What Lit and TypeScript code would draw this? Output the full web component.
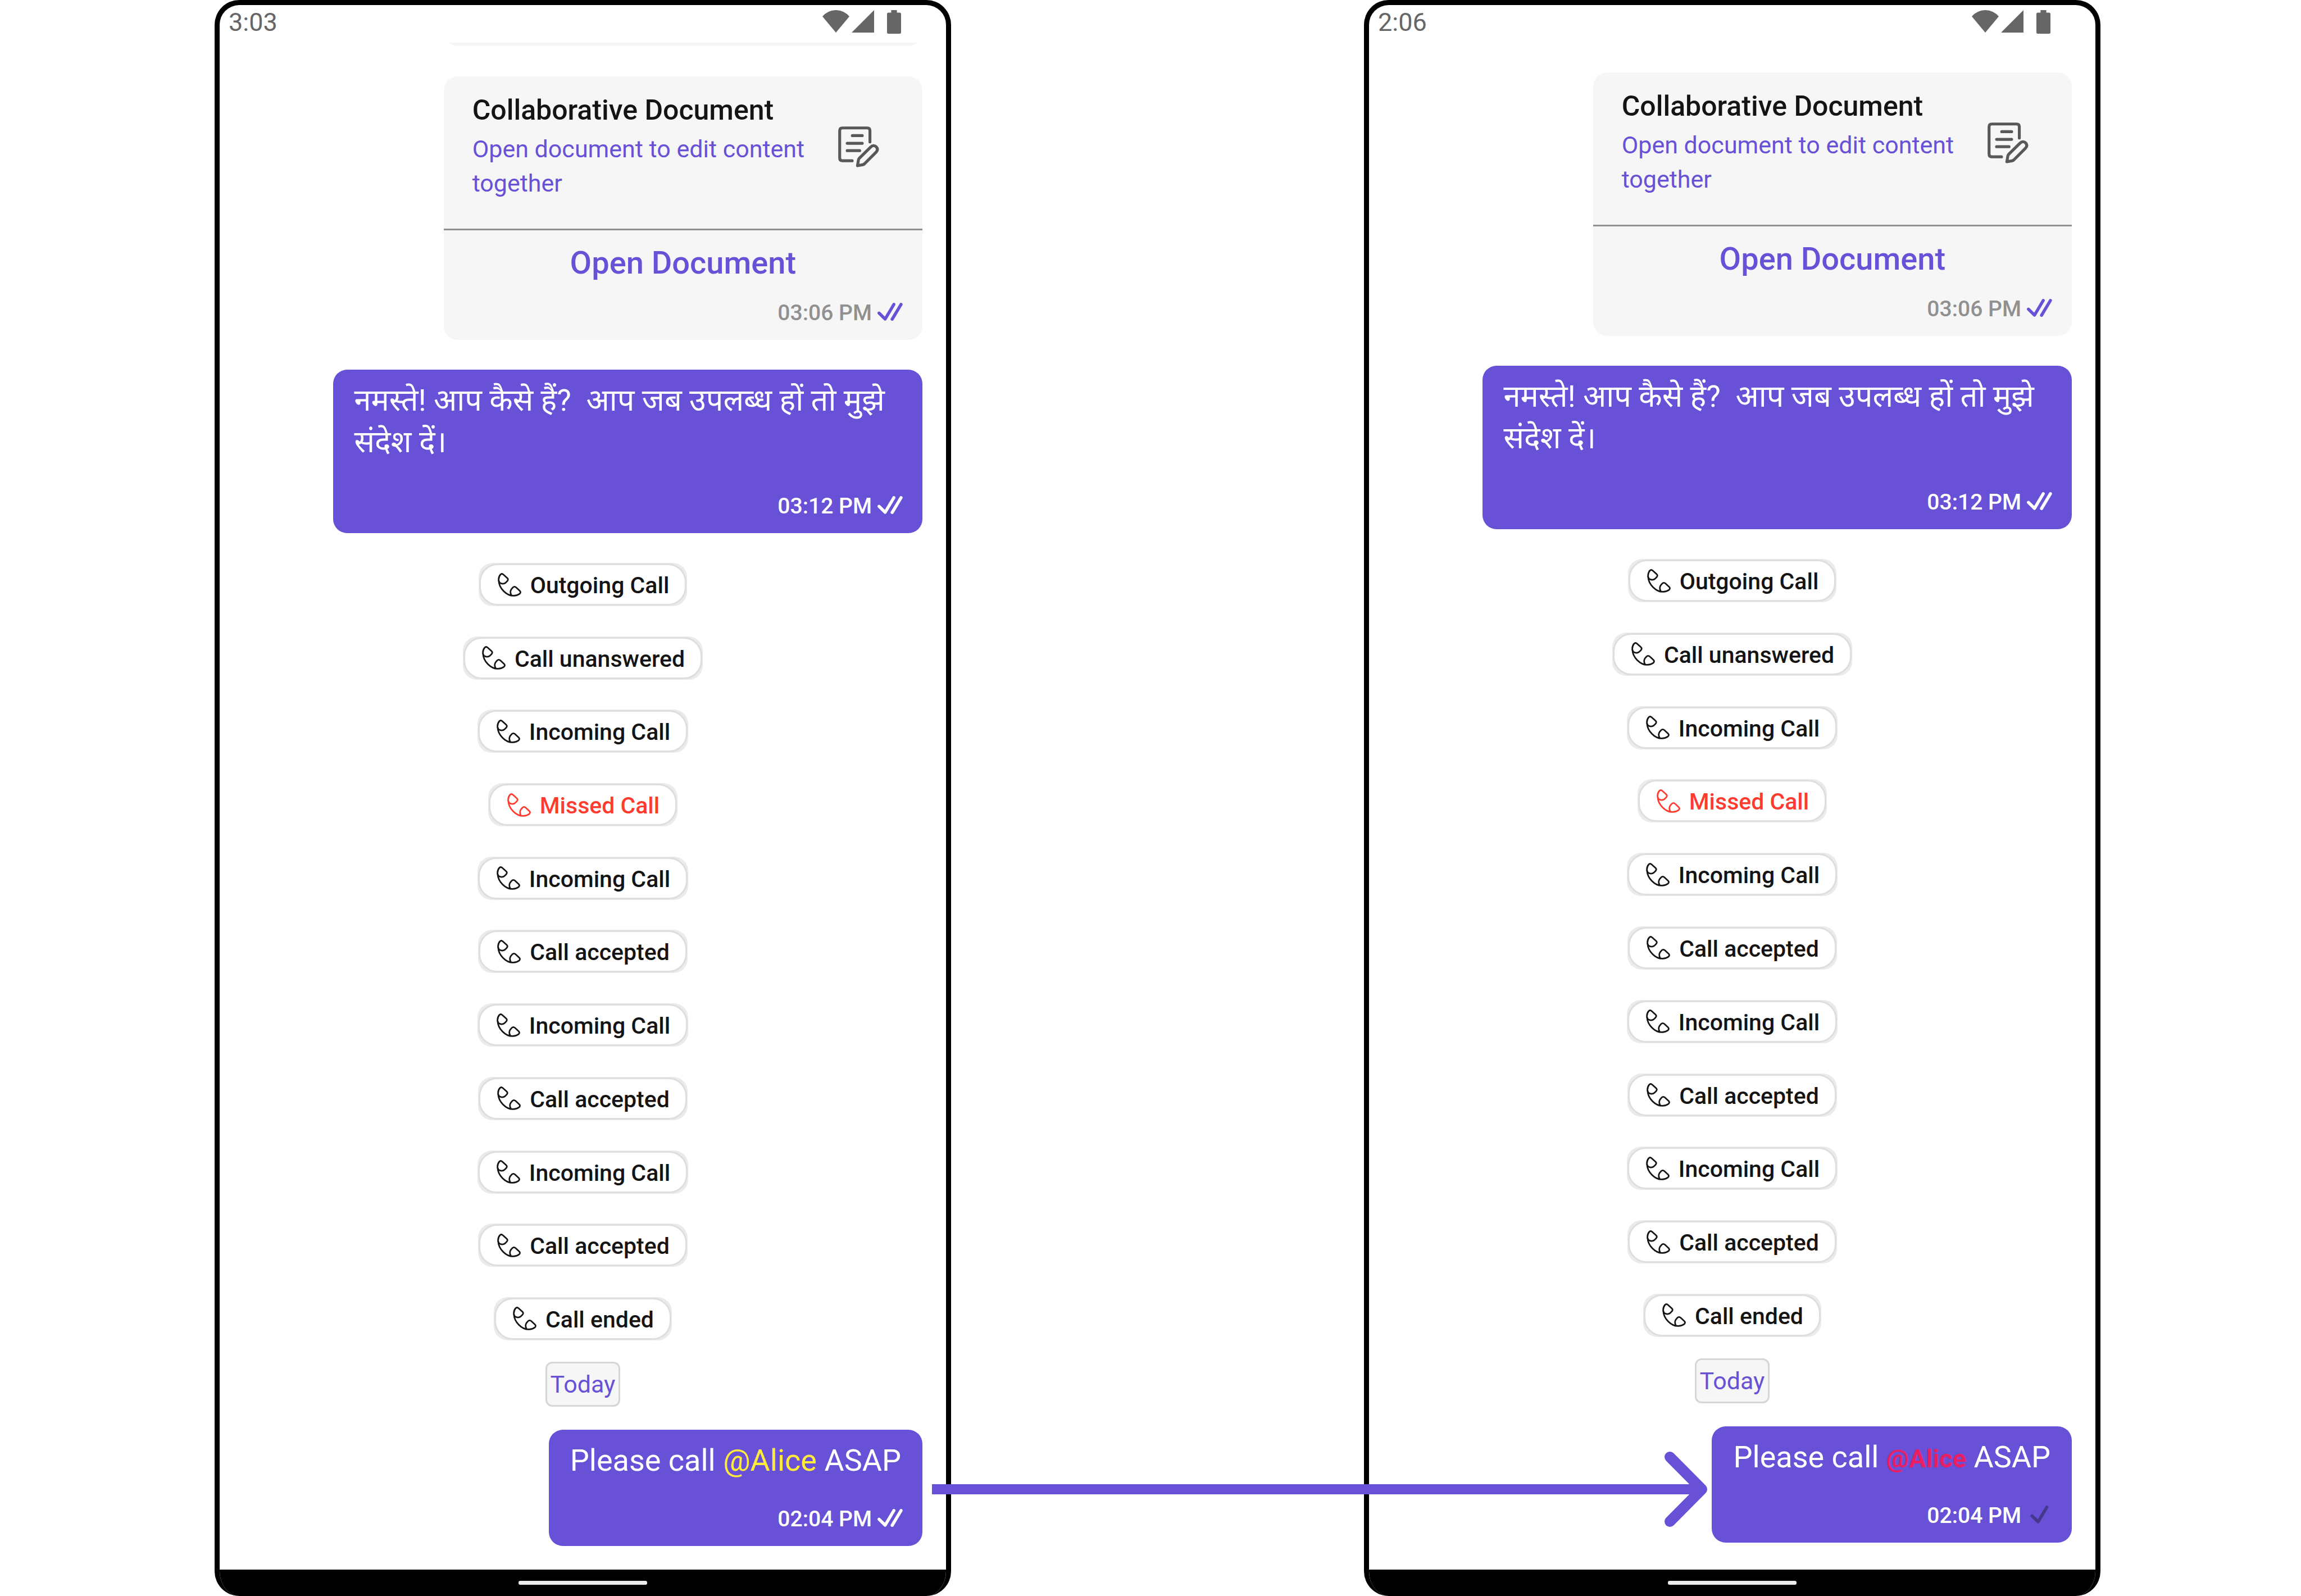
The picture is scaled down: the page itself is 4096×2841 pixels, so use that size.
import { LitElement, html, svg, css, nothing } from "lit";
import { customElement, property } from "lit/decorators.js";
import { classMap } from "lit/directives/class-map.js";

type CallLabel = { text: string; missed?: boolean };

const CALLS: CallLabel[] = [
  { text: "Outgoing Call" },
  { text: "Call unanswered" },
  { text: "Incoming Call" },
  { text: "Missed Call", missed: true },
  { text: "Incoming Call" },
  { text: "Call accepted" },
  { text: "Incoming Call" },
  { text: "Call accepted" },
  { text: "Incoming Call" },
  { text: "Call accepted" },
  { text: "Call ended" },
];

const HINDI = "नमस्ते! आप कैसे हैं?  आप जब उपलब्ध हों तो मुझे संदेश दें।";

const base = css`
  *,
  *::before,
  *::after {
    box-sizing: border-box;
  }
  svg {
    display: block;
    flex: none;
  }
`;

/** Time of a message with its delivery ticks. */
@customElement("message-receipt")
export class MessageReceipt extends LitElement {
  @property() time = "";
  @property({ type: Boolean }) single = false;

  static styles = [
    base,
    css`
      :host {
        display: flex;
        justify-content: flex-end;
        align-items: center;
        gap: 10px;
        padding: 0 35px 26px 0;
        font-size: 39px;
        line-height: 44px;
        font-weight: 500;
      }
      .ticks {
        width: 45px;
        height: 36px;
        fill: none;
        stroke: var(--tick, currentColor);
        stroke-width: 18;
        stroke-linecap: round;
        stroke-linejoin: round;
      }
    `,
  ];

  render() {
    return html`<span>${this.time}</span>
      <svg
        class="ticks"
        viewBox=${this.single ? "624 66 148 118" : "645 66 148 118"}
        aria-hidden="true"
      >
        <path d="M654 126L690 161L741 75" />
        ${this.single ? nothing : svg`<path d="M731 162L783 75" />`}
      </svg>`;
  }
}

/** Card that invites the reader to open a shared document. */
@customElement("document-card")
export class DocumentCard extends LitElement {
  static styles = [
    base,
    css`
      :host {
        display: block;
        border-radius: 25px;
        background: #f6f6f6;
        color: #909090;
        --tick: #6851d6;
      }
      .about {
        display: flex;
        align-items: center;
        justify-content: space-between;
        padding: 30px 77px 50px 51px;
        border-bottom: 3px solid #909090;
      }
      .title {
        margin: 0 0 8px;
        font-size: 50px;
        line-height: 61px;
        font-weight: 500;
        color: #141414;
      }
      .text {
        margin: 0;
        font-size: 43px;
        line-height: 61px;
        color: #6851d6;
      }
      .icon {
        width: 73px;
        height: 73px;
        fill: none;
        stroke: #585858;
        stroke-width: 17;
        stroke-linecap: round;
        stroke-linejoin: round;
      }
      .open {
        display: block;
        width: 100%;
        margin: 26px 0 35px;
        padding: 0;
        border: 0;
        background: none;
        font: 500 56px/64px Roboto, "Liberation Sans", sans-serif;
        color: #6851d6;
        cursor: pointer;
      }
    `,
  ];

  render() {
    return html`<div class="about">
        <div>
          <h2 class="title">Collaborative Document</h2>
          <p class="text">Open document to edit content together</p>
        </div>
        <svg class="icon" viewBox="57 62 240 240" aria-hidden="true">
          <path
            d="M243 153V87Q243 71 227 71H82Q66 71 66 87V247Q66 263 82 263H139M140 116H198M110 161H198M110 204H183"
          />
          <path
            d="M170 292L176 257Q177 252 181 248L247 183C258 172 271 173 279 181C288 190 290 201 279 213L213 279Q208 285 202 286Z"
          />
        </svg>
      </div>
      <button class="open" type="button">Open Document</button>
      <message-receipt time="03:06 PM"></message-receipt>`;
  }
}

/** Pill that records one call event. */
@customElement("call-chip")
export class CallChip extends LitElement {
  @property() label = "";
  @property({ type: Boolean }) missed = false;

  static styles = [
    base,
    css`
      :host {
        display: block;
        padding: 1px;
        border-radius: 25px;
        background: #ebebeb;
      }
      .pill {
        display: flex;
        align-items: center;
        gap: 16px;
        padding: 0 28px 0 30px;
        border: 3px solid #dedede;
        border-radius: 33px;
        background: #fff;
        color: #141414;
      }
      .missed {
        color: #ff3b30;
      }
      .label {
        padding-top: 3px;
        font-size: 41px;
        line-height: 66px;
        font-weight: 500;
        white-space: nowrap;
      }
      .icon {
        width: 42px;
        height: 42px;
        fill: none;
        stroke: currentColor;
        stroke-width: 9;
        stroke-linecap: round;
        stroke-linejoin: round;
      }
    `,
  ];

  render() {
    return html`<div class=${classMap({ pill: true, missed: this.missed })}>
      <svg class="icon" viewBox="34 61 138 138" aria-hidden="true">
        <path
          d="M40 106C38 92 44 77 50 70Q58 62 67 70L89 90Q98 98 91 107L80 118Q67 128 50 120Q42 116 40 106Z"
        />
        <path
          d="M40 106C42 150 85 195 128 194C144 193 155 188 163 182Q171 174 163 165L141 145Q132 137 123 145L113 157Q104 171 113 189"
        />
      </svg>
      <span class="label">${this.label}</span>
    </div>`;
  }
}

/** Phone frame showing the conversation. */
@customElement("chat-phone")
export class ChatPhone extends LitElement {
  @property() clock = "";
  @property({ type: Boolean }) styled = false;

  static styles = [
    base,
    css`
      :host {
        display: flex;
        flex-direction: column;
        min-width: 0;
        min-height: 100vh;
        border: 9px solid #000;
        border-bottom: 0;
        border-radius: 44px;
        overflow: hidden;
        background: #fff;
      }
      .status {
        display: flex;
        align-items: flex-start;
        height: 67px;
        padding: 0 80px 0 16px;
        color: #666;
        fill: #666;
      }
      .clock {
        flex: 1;
        font-size: 45px;
        line-height: 62px;
      }
      .wifi {
        width: 48px;
        height: 40px;
        margin: 9px 4px 0 0;
      }
      .signal {
        width: 40px;
        height: 40px;
        margin: 9px 23px 0 0;
      }
      .battery {
        width: 25px;
        height: 42px;
        margin-top: 9px;
      }
      .chat {
        flex: 1;
        display: flex;
        flex-direction: column;
        align-items: flex-end;
        padding: 0 42px 42px;
      }
      .scrolled {
        padding: 53px 42px 48px;
      }
      .earlier {
        display: flex;
        align-items: flex-end;
        width: 70.5%;
        height: 6px;
        margin-bottom: 54px;
        overflow: hidden;
      }
      .earlier-card {
        flex: 1;
        height: 50px;
        border-radius: 25px;
        background: #f6f6f6;
      }
      .card {
        width: 70.5%;
      }
      .bubble {
        max-width: 86.8%;
        border-radius: 25px;
        background: #6851d6;
        color: #fff;
      }
      .greeting {
        margin: 53px 0;
      }
      .text {
        margin: 0 0 45px;
        padding: 18px 38px 0;
        font-size: 54px;
        line-height: 74px;
        white-space: pre-wrap;
      }
      .greeting .text {
        padding-bottom: 10px;
      }
      .mention {
        color: #ffeb3b;
      }
      .mention-styled {
        font-size: 45px;
        font-weight: 700;
        line-height: 1;
        color: #e91e63;
      }
      .sent {
        --tick: #46368c;
      }
      .calls {
        flex: 1;
        align-self: stretch;
        display: flex;
        flex-direction: column;
        align-items: center;
        justify-content: space-between;
        margin: 0;
        padding: 0;
        list-style: none;
      }
      .day {
        align-self: center;
        margin: 38px 0 41px;
        padding: 0 6px;
        border: 3px solid #d6d6d6;
        border-radius: 12px;
        background: #f6f6f6;
        font-size: 43px;
        line-height: 74px;
        color: #6851d6;
      }
      .nav {
        display: flex;
        align-items: center;
        justify-content: center;
        height: 47px;
        background: #000;
      }
      .handle {
        width: 229px;
        height: 7px;
        border-radius: 3px;
        background: #ebebeb;
      }
    `,
  ];

  render() {
    return html`<div class="status">
        <span class="clock">${this.clock}</span>
        <svg class="wifi" viewBox="0 0 48 40" aria-hidden="true">
          <path d="M0 11.2A31.3 31.3 0 0 1 48 11.2L24 40Z" />
        </svg>
        <svg class="signal" viewBox="0 0 40 40" aria-hidden="true"><path d="M40 0V40H0Z" /></svg>
        <svg class="battery" viewBox="0 0 25 42" aria-hidden="true">
          <path d="M7.4 0H17.6V4.5H22.5Q25 4.5 25 7V39.5Q25 42 22.5 42H2.5Q0 42 0 39.5V7Q0 4.5 2.5 4.5H7.4Z" />
        </svg>
      </div>
      <div class=${classMap({ chat: true, scrolled: this.styled })}>
        ${this.styled
          ? nothing
          : html`<div class="earlier"><div class="earlier-card"></div></div>`}
        <document-card class="card"></document-card>
        <div class="bubble greeting">
          <p class="text" lang="hi">${HINDI}</p>
          <message-receipt time="03:12 PM"></message-receipt>
        </div>
        <ul class="calls">
          ${CALLS.map(
            (c) => html`<li><call-chip label=${c.text} ?missed=${c.missed}></call-chip></li>`
          )}
        </ul>
        <div class="day">Today</div>
        <div class=${classMap({ bubble: true, sent: this.styled })}>
          <p class="text">Please call <span class=${this.styled ? "mention-styled" : "mention"}>@Alice</span> ASAP</p>
          <message-receipt time="02:04 PM" ?single=${this.styled}></message-receipt>
        </div>
      </div>
      <div class="nav"><span class="handle"></span></div>`;
  }
}

@customElement("app-root")
export class AppRoot extends LitElement {
  static styles = [
    base,
    css`
      :host {
        display: grid;
        grid-template-columns: 1fr 735px 1fr;
        min-height: 100vh;
        padding: 0 357px 0 382px;
        background: #fff;
        font-family: Roboto, "Noto Sans", "Liberation Sans", sans-serif;
      }
      .between {
        position: relative;
      }
      .arrow {
        position: absolute;
        left: -34px;
        right: -611px;
        bottom: 123px;
        display: flex;
        align-items: center;
        z-index: 1;
      }
      .shaft {
        flex: 1;
        height: 18px;
        margin-right: -64px;
        background: #6851d6;
      }
      .head {
        width: 76px;
        height: 134px;
        fill: none;
        stroke: #6851d6;
        stroke-width: 19;
        stroke-linecap: round;
        stroke-linejoin: round;
      }
    `,
  ];

  render() {
    return html`<chat-phone clock="3:03"></chat-phone>
      <div class="between">
        <div class="arrow">
          <div class="shaft"></div>
          <svg class="head" viewBox="0 0 76 134" aria-hidden="true">
            <path d="M9.5 9.5L66.5 67L9.5 124.5" />
          </svg>
        </div>
      </div>
      <chat-phone clock="2:06" styled></chat-phone>`;
  }
}
